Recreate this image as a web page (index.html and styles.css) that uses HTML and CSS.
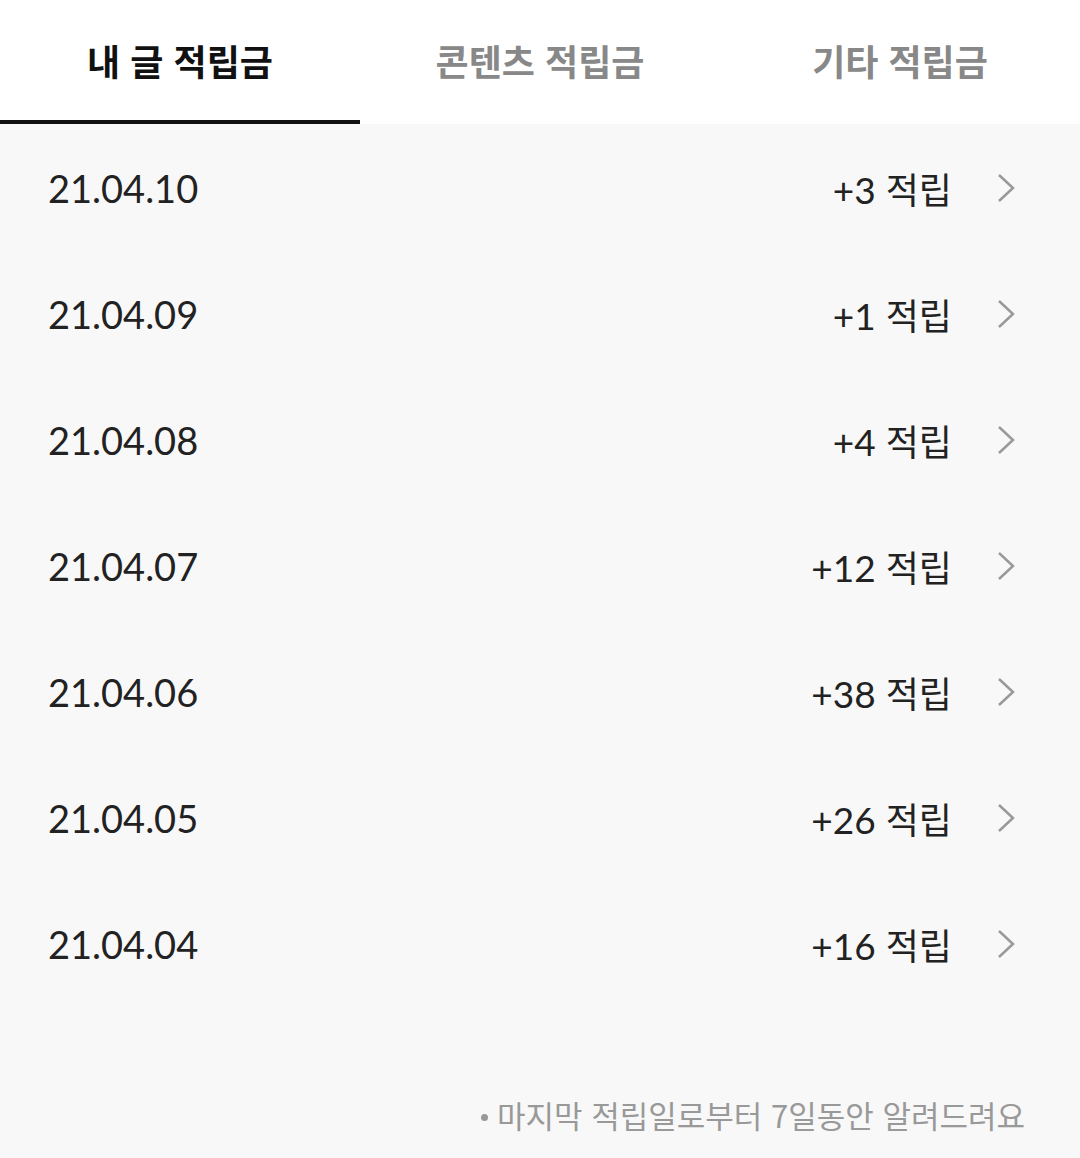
FILE: index.html
```html
<!DOCTYPE html>
<html lang="ko">
<head>
<meta charset="utf-8">
<link rel="stylesheet" href="styles.css">
</head>
<body>
<div class="app">
  <nav class="tabs">
    <div class="tab active">내 글 적립금</div>
    <div class="tab">콘텐츠 적립금</div>
    <div class="tab">기타 적립금</div>
  </nav>
  <main class="content">
    <ul class="list">
      <li class="row"><span class="date">21.04.10</span><span class="amount"><span class="num">+3</span> 적립</span><svg class="chev" viewBox="0 0 20 32"><path d="M3 3 L17 16 L3 29" /></svg></li>
      <li class="row"><span class="date">21.04.09</span><span class="amount"><span class="num">+1</span> 적립</span><svg class="chev" viewBox="0 0 20 32"><path d="M3 3 L17 16 L3 29" /></svg></li>
      <li class="row"><span class="date">21.04.08</span><span class="amount"><span class="num">+4</span> 적립</span><svg class="chev" viewBox="0 0 20 32"><path d="M3 3 L17 16 L3 29" /></svg></li>
      <li class="row"><span class="date">21.04.07</span><span class="amount"><span class="num">+12</span> 적립</span><svg class="chev" viewBox="0 0 20 32"><path d="M3 3 L17 16 L3 29" /></svg></li>
      <li class="row"><span class="date">21.04.06</span><span class="amount"><span class="num">+38</span> 적립</span><svg class="chev" viewBox="0 0 20 32"><path d="M3 3 L17 16 L3 29" /></svg></li>
      <li class="row"><span class="date">21.04.05</span><span class="amount"><span class="num">+26</span> 적립</span><svg class="chev" viewBox="0 0 20 32"><path d="M3 3 L17 16 L3 29" /></svg></li>
      <li class="row"><span class="date">21.04.04</span><span class="amount"><span class="num">+16</span> 적립</span><svg class="chev" viewBox="0 0 20 32"><path d="M3 3 L17 16 L3 29" /></svg></li>
    </ul>
    <p class="note"><span class="dot"></span>마지막 적립일로부터 7일동안 알려드려요</p>
  </main>
</div>
</body>
</html>
```
FILE: styles.css
```css
html, body {
  margin: 0;
  padding: 0;
  background: #f8f8f8;
}
body {
  font-family: "Noto Sans CJK KR", "Noto Sans", sans-serif;
}
.app {
  width: 1080px;
  height: 1158px;
  display: flex;
  flex-direction: column;
  background: #f8f8f8;
}
.tabs {
  display: flex;
  height: 124px;
  background: #ffffff;
}
.tab {
  width: 360px;
  box-sizing: border-box;
  display: flex;
  justify-content: center;
  align-items: center;
  padding-bottom: 4px;
  font-size: 36px;
  font-weight: 700;
  color: #888888;
}
.tab.active {
  color: #111111;
  border-bottom: 4px solid #111111;
  padding-bottom: 0;
}
.content {
  flex: 1;
  display: flex;
  flex-direction: column;
}
.list {
  list-style: none;
  margin: 0;
  padding: 1px 0 0 0;
}
.row {
  height: 126px;
  display: flex;
  align-items: center;
  padding: 0 64px 0 48px;
}
.date {
  font-family: "Lato", "Noto Sans", sans-serif;
  font-size: 38px;
  color: #222222;
  flex: 1;
}
.amount {
  font-size: 36px;
  color: #222222;
}
.num {
  font-family: "Lato", "Noto Sans", sans-serif;
  font-size: 37px;
}
.chev {
  width: 20px;
  height: 32px;
  margin-left: 44px;
  fill: none;
  stroke: #999999;
  stroke-width: 2.5;
}
.note {
  margin: 85px 55px 0 0;
  font-size: 31px;
  color: #999999;
  display: flex;
  justify-content: flex-end;
  align-items: center;
}
.dot {
  width: 7px;
  height: 7px;
  border-radius: 50%;
  background: #999999;
  margin-right: 9px;
  margin-top: 6px;
}
```
